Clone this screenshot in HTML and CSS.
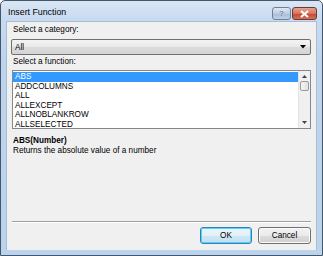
FILE: index.html
```html
<!DOCTYPE html>
<html>
<head>
<meta charset="utf-8">
<link rel="stylesheet" href="styles.css">
</head>
<body>
<div class="window">
  <div class="titlebar">
    <span class="title">Insert Function</span>
    <div class="caption-btns">
      <div class="cbtn help">?</div>
      <div class="cbtn close">
        <svg width="9" height="8" viewBox="0 0 9 8"><path d="M1 1 L8 7 M8 1 L1 7" stroke="#fff" stroke-width="2"/></svg>
      </div>
    </div>
  </div>
  <div class="content">
    <div class="label lbl1">Select a category:</div>
    <div class="combo">
      <span>All</span>
      <svg class="drop" width="6" height="4" viewBox="0 0 6 4"><path d="M0 0 H6 L3 3.5 Z" fill="#000"/></svg>
    </div>
    <div class="label lbl2">Select a function:</div>
    <div class="listbox">
      <ul class="items">
        <li class="sel">ABS</li>
        <li>ADDCOLUMNS</li>
        <li>ALL</li>
        <li>ALLEXCEPT</li>
        <li>ALLNOBLANKROW</li>
        <li>ALLSELECTED</li>
      </ul>
      <div class="vscroll">
        <svg class="arr" width="5" height="3" viewBox="0 0 5 3"><path d="M0 3 H5 L2.5 0 Z" fill="#444"/></svg>
        <div class="thumb"></div>
        <div class="track"></div>
        <svg class="arr" width="5" height="3" viewBox="0 0 5 3"><path d="M0 0 H5 L2.5 3 Z" fill="#444"/></svg>
      </div>
    </div>
    <div class="sig">ABS(Number)</div>
    <div class="desc">Returns the absolute value of a number</div>
    <div class="spacer"></div>
    <div class="sep"></div>
    <div class="buttons">
      <button class="btn ok">OK</button>
      <button class="btn">Cancel</button>
    </div>
  </div>
</div>
</body>
</html>
```
FILE: styles.css
```css
html, body {
  margin: 0;
  padding: 0;
  background: #ffffff;
}
body {
  font-family: "Liberation Sans", Arial, sans-serif;
  font-size: 8.2px;
  color: #000;
}
.window {
  width: 323px;
  height: 256px;
  box-sizing: border-box;
  border: 1px solid #44566c;
  border-radius: 5px 5px 0 0;
  background: linear-gradient(#d9e6f4 0px, #c7daf0 20px, #bed4ed 60px, #bcd3ec 100%);
  display: flex;
  flex-direction: column;
}
.titlebar {
  height: 20px;
  display: flex;
  align-items: flex-start;
  justify-content: space-between;
  padding: 0 5px 0 7px;
}
.title {
  font-size: 8.8px;
  margin-top: 6px;
  color: #000;
}
.caption-btns {
  display: flex;
  gap: 1px;
  margin-top: 6px;
}
.cbtn {
  height: 11px;
  border: 1px solid #6d7f99;
  border-radius: 3px;
  display: flex;
  align-items: center;
  justify-content: center;
  box-sizing: content-box;
}
.help {
  width: 17px;
  background: linear-gradient(#dfe8f3, #bccce0 50%, #a9bdd6 51%, #bfd0e4);
  color: #6c7e96;
  font-weight: bold;
  font-size: 8px;
  text-shadow: 0 0 1px #fff;
}
.close {
  width: 23px;
  border-color: #6a3a35;
  background: linear-gradient(#e4a393, #d6765f 50%, #c6452c 51%, #d4705a);
}
.content {
  flex: 1;
  margin: 0 5px 5px 5px;
  background: #f0f0f0;
  border: 1px solid #a9bdd4;
  border-bottom: 0;
  display: flex;
  flex-direction: column;
  padding: 0 5px 6px 4px;
}
.label {
  padding-left: 2px;
  line-height: 10px;
}
.lbl1 {
  margin-top: 3px;
}
.combo {
  margin-top: 4px;
  height: 14px;
  border: 1px solid #707070;
  border-radius: 2px;
  background: linear-gradient(#f3f3f3, #e9e9e9 50%, #dcdcdc 51%, #d4d4d4);
  display: flex;
  align-items: center;
  justify-content: space-between;
  padding: 0 4px 0 3px;
}
.drop {
  display: block;
}
.lbl2 {
  margin-top: 2px;
}
.listbox {
  margin-top: 3px;
  margin-left: 1px;
  height: 57px;
  border: 1px solid #828790;
  background: #fff;
  display: flex;
}
.items {
  list-style: none;
  margin: 0;
  padding: 1px 0 0 0;
  flex: 1;
}
.items li {
  height: 9.5px;
  line-height: 9.5px;
  padding-left: 2px;
}
.items li.sel {
  background: #3399ff;
  color: #fff;
}
.vscroll {
  width: 12px;
  background: #f0f0f0;
  border-left: 1px solid #e3e3e3;
  display: flex;
  flex-direction: column;
  align-items: center;
  padding-top: 4px;
  padding-bottom: 4px;
  box-sizing: border-box;
}
.arr {
  display: block;
}
.thumb {
  margin-top: 3px;
  width: 9px;
  height: 10px;
  border: 1px solid #9a9a9a;
  border-radius: 2px;
  background: linear-gradient(90deg, #f4f4f4, #e2e2e2);
  box-sizing: border-box;
}
.track {
  flex: 1;
}
.sig {
  margin-top: 7px;
  padding-left: 2px;
  font-weight: bold;
  line-height: 10px;
}
.desc {
  padding-left: 2px;
  line-height: 10px;
}
.spacer {
  flex: 1;
}
.sep {
  height: 1px;
  background: #a0a0a0;
  border-bottom: 1px solid #ffffff;
  margin-left: 1px;
}
.buttons {
  margin-top: 4px;
  display: flex;
  justify-content: flex-end;
  gap: 6px;
}
.btn {
  font-family: "Liberation Sans", Arial, sans-serif;
  font-size: 8.2px;
  color: #000;
  height: 17px;
  padding: 0;
  border: 1px solid #707070;
  border-radius: 3px;
  background: linear-gradient(#f2f2f2, #ebebeb 50%, #dddddd 51%, #cfcfcf);
  box-shadow: inset 0 0 0 1px #fbfbfb;
  width: 53px;
}
.btn.ok {
  width: 52px;
  border-color: #3c7fb1;
  box-shadow: inset 0 0 0 1px #48d4ff;
  background: linear-gradient(#ecf5fa, #e2f0f8 50%, #cfe7f5 51%, #c0dff2);
}
```
